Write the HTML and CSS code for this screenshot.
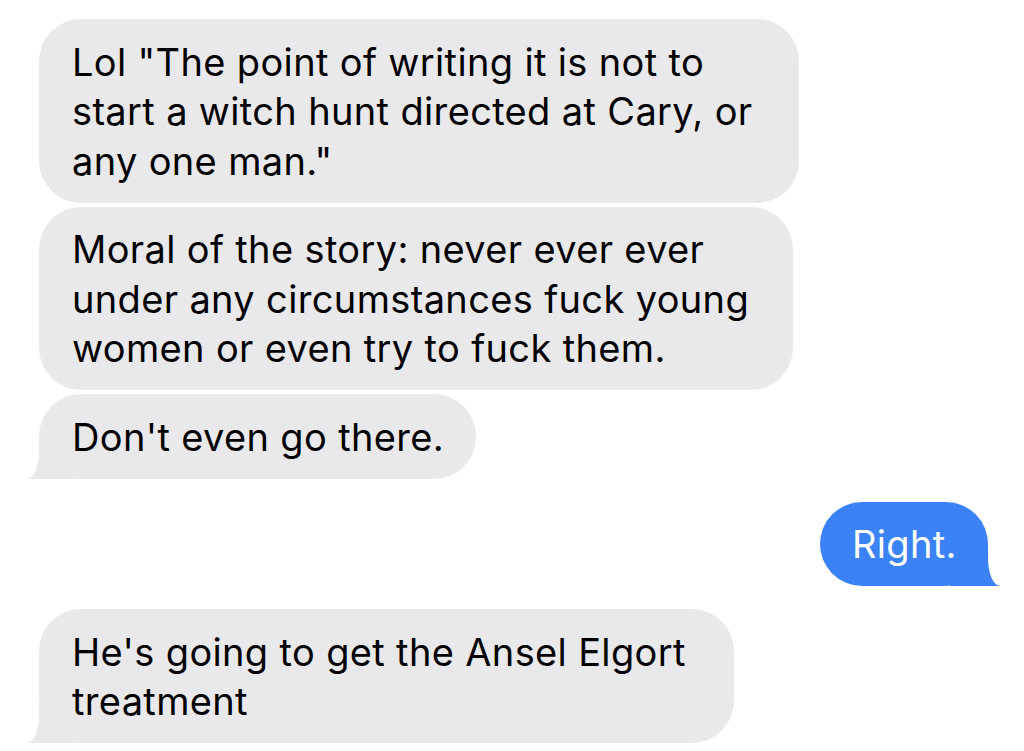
FILE: index.html
```html
<!DOCTYPE html>
<html lang="en">
<head>
<meta charset="utf-8">
<title>Messages</title>
<link rel="stylesheet" href="styles.css">
</head>
<body>
<main class="thread">
  <p class="bubble in w1">Lol "The point of writing it is not to<br>start a witch hunt directed at Cary, or<br>any one man."</p>
  <p class="bubble in w2 gap-s">Moral of the story: never ever ever<br>under any circumstances fuck young<br>women or even try to fuck them.</p>
  <p class="bubble in w3 gap-s tail">Don't even go there.</p>
  <p class="bubble out w-right gap-l tail">Right.</p>
  <p class="bubble in w4 gap-l tail">He's going to get the Ansel Elgort<br>treatment</p>
</main>
</body>
</html>
```
FILE: styles.css
```css
html, body {
  margin: 0;
  background: #ffffff;
}
body {
  font-family: Inter, "Noto Sans", "Liberation Sans", sans-serif;
  -webkit-font-smoothing: antialiased;
}
.thread {
  display: flex;
  flex-direction: column;
  align-items: flex-start;
  padding: 19px 36px 0 39px;
}
.bubble {
  position: relative;
  z-index: 0;
  margin: 0;
  box-sizing: border-box;
  padding: 18.5px 0 16.5px 33px;
  font-size: 38px;
  line-height: 49.5px;
  letter-spacing: 0.35px;
  border-radius: 42px;
  white-space: nowrap;
}
.in {
  background: #e9e9eb;
  color: #000;
}
.out {
  background: #3b82f6;
  color: #fff;
  align-self: flex-end;
  padding-left: 32px;
}
.gap-s { margin-top: 4px; }
.gap-l { margin-top: 23px; }
.w1 { width: 760px; }
.w2 { width: 754px; }
.w3 { width: 437px; }
.w4 { width: 695px; }
.w-right { width: 168px; }

.tail.in::before,
.tail.in::after,
.tail.out::before,
.tail.out::after {
  content: "";
  position: absolute;
  z-index: -1;
  bottom: 0;
  height: 40px;
}
.tail.in::before {
  left: -12px;
  width: 50px;
  background: #e9e9eb;
}
.tail.in::after {
  left: -60px;
  width: 60px;
  background: #fff;
  border-bottom-right-radius: 12px 28px;
}
.tail.out::before {
  right: -12px;
  width: 50px;
  background: #3b82f6;
}
.tail.out::after {
  right: -60px;
  width: 60px;
  background: #fff;
  border-bottom-left-radius: 12px 28px;
}
```
